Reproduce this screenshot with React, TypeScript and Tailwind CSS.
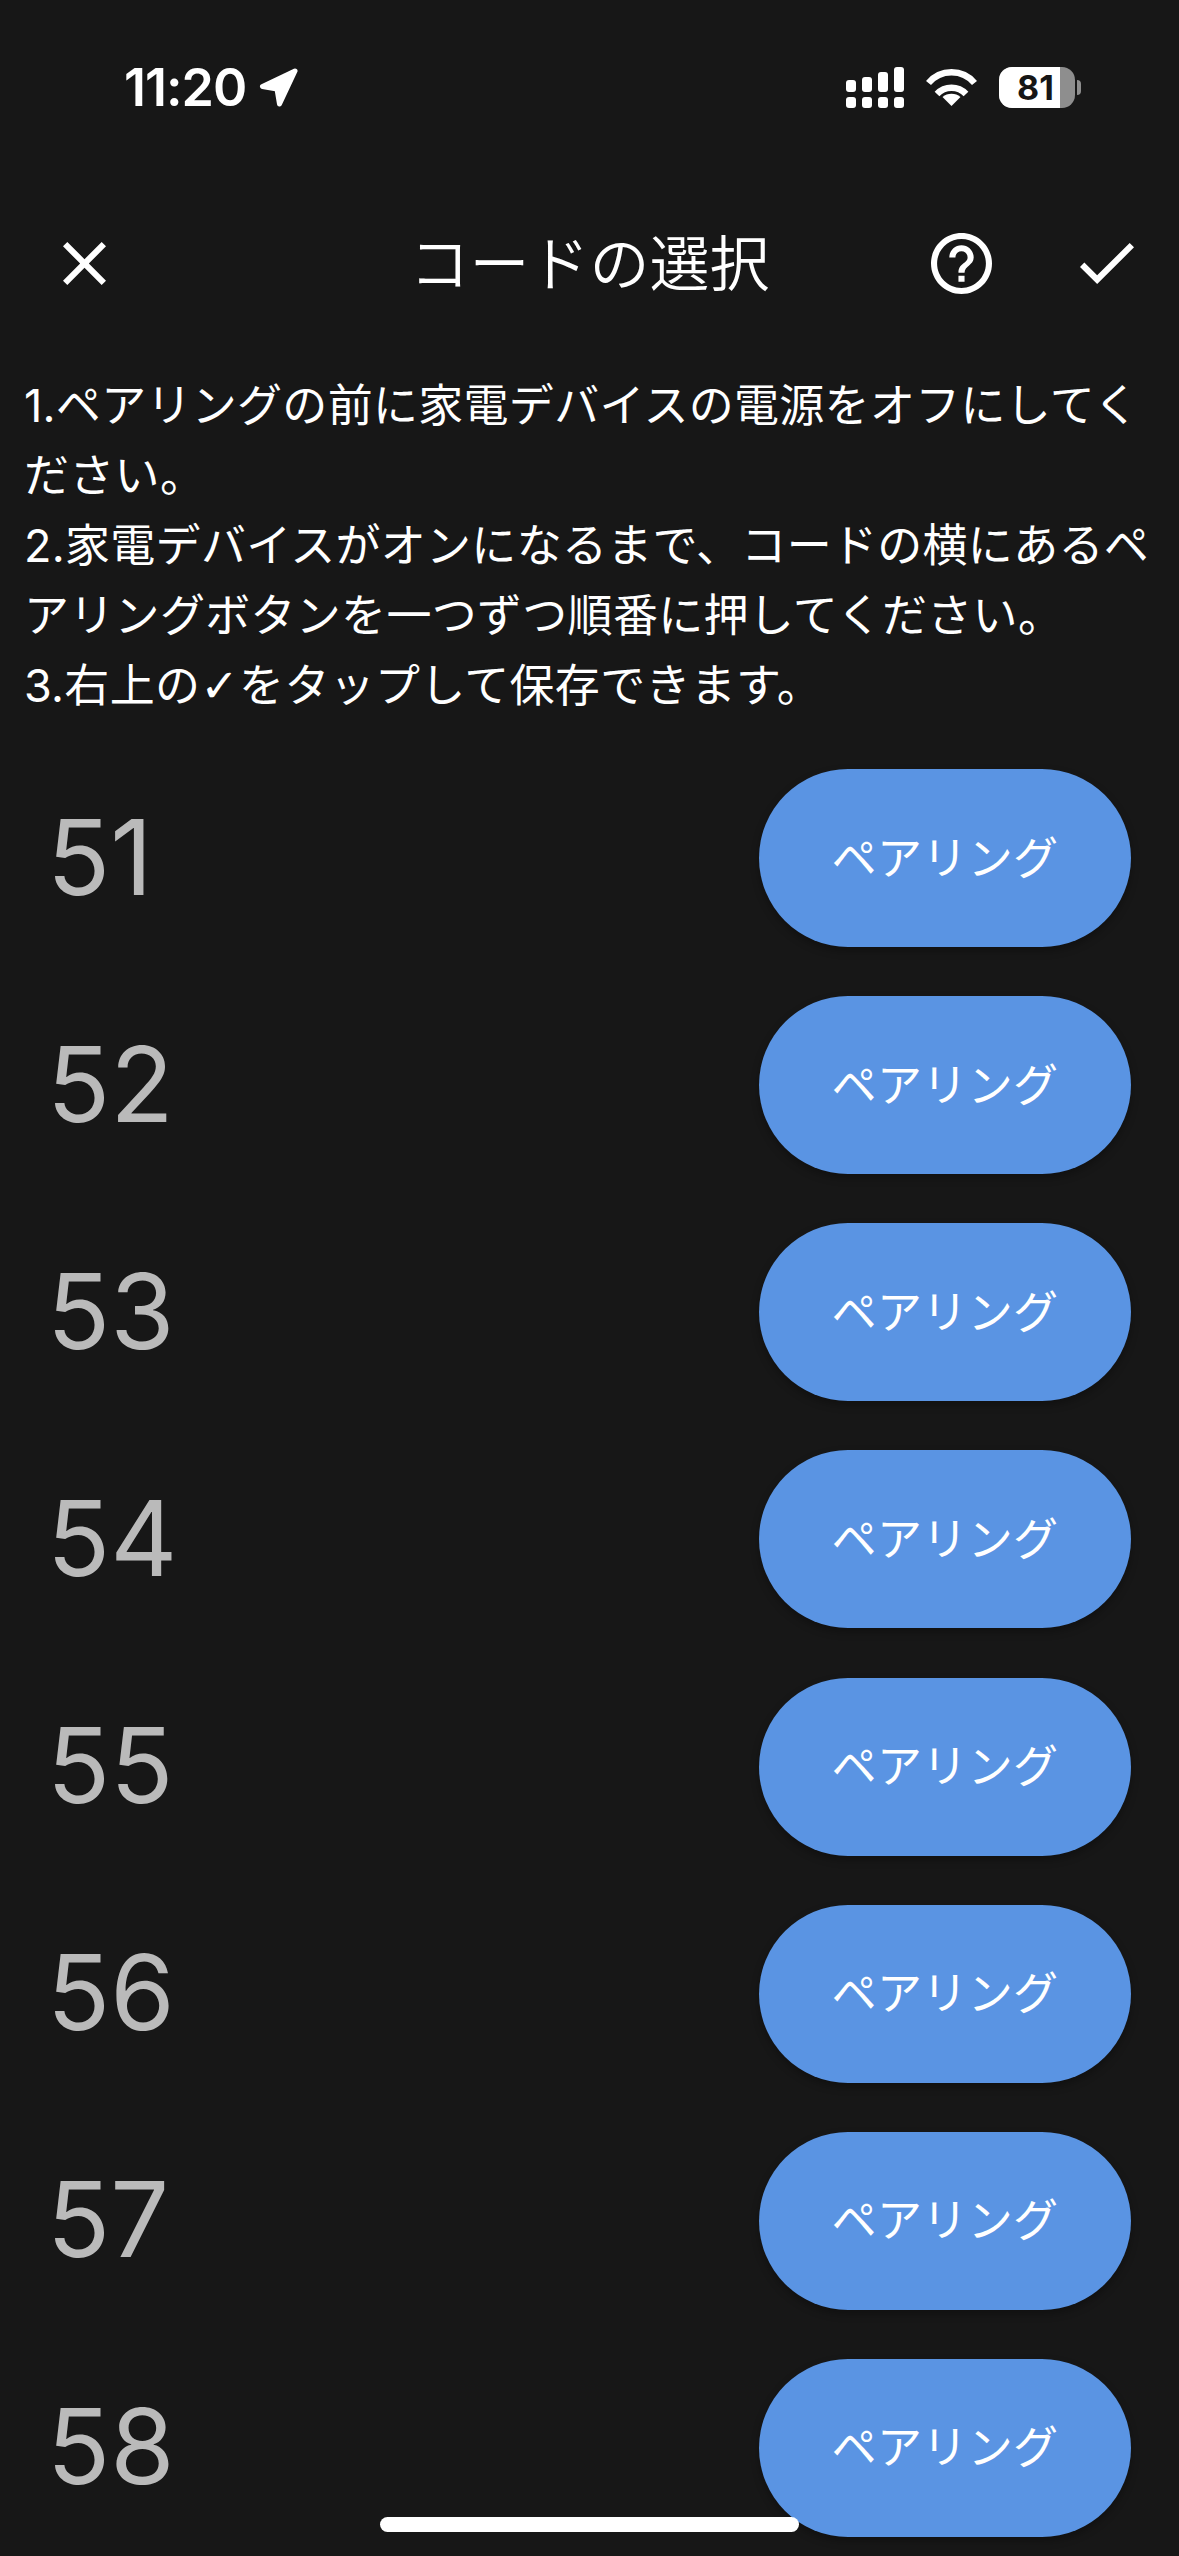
const font = "font-['Inter','Noto_Sans_CJK_JP',sans-serif]";

const codes = [51, 52, 53, 54, 55, 56, 57, 58];

function Signal() {
  const tops = [13, 10, 5, 0];
  return (
    <svg width="58" height="41" viewBox="0 0 58 41" fill="#fff">
      {tops.map((t, i) => (
        <g key={i}>
          <rect x={i * 16} y={t} width="10" height={25 - t} rx="3" />
          <rect x={i * 16} y="30" width="10" height="11" rx="3" />
        </g>
      ))}
    </svg>
  );
}

function Wifi() {
  return (
    <svg width="51" height="37" viewBox="0 0 51 37" fill="none" stroke="#fff">
      <path d="M2.5 14 A30 30 0 0 1 48.5 14" strokeWidth="6.5" />
      <path d="M11 25 A20 20 0 0 1 40 25" strokeWidth="6.5" />
      <path d="M25.5 37 L16.5 28 A14 14 0 0 1 34.5 28 Z" fill="#fff" stroke="none" />
    </svg>
  );
}

function Arrow() {
  return (
    <svg width="39" height="39" viewBox="0 0 39 39" fill="#fff" stroke="#fff" strokeWidth="5" strokeLinejoin="round">
      <path d="M36 3 L3.5 18.5 L18 21 L20.5 36 Z" />
    </svg>
  );
}

function Battery() {
  return (
    <div className="flex items-center gap-[2px]">
      <div className="relative h-[41px] w-[76px] overflow-hidden rounded-[13px] bg-[#8e8e8e]">
        <div className="h-full w-[61px] bg-white" />
        <div className={`absolute left-[18px] top-0 flex h-full items-center text-[34px] font-bold leading-none text-[#161616] ${font}`}>
          81
        </div>
      </div>
      <div className="h-[15px] w-[4px] rounded-r-full bg-[#8e8e8e]" />
    </div>
  );
}

export default function App() {
  return (
    <div className={`relative flex h-[2556px] w-[1179px] flex-col overflow-hidden bg-[#171717] text-white ${font}`}>
      <div className="mt-[67px] flex h-[41px] items-center justify-between pl-[124px] pr-[98px]">
        <div className="flex items-center gap-[13px]">
          <span className="text-[52px] font-semibold leading-none tracking-[-1px]">11:20</span>
          <Arrow />
        </div>
        <div className="flex items-center gap-[22px]">
          <Signal />
          <Wifi />
          <Battery />
        </div>
      </div>

      <div className="mt-[125px] grid h-[61px] grid-cols-[1fr_auto_1fr] items-center">
        <div className="pl-[63px]">
          <svg className="block" width="43" height="43" viewBox="5 5 14 14" fill="#fff">
            <path d="M19 6.41L17.59 5 12 10.59 6.41 5 5 6.41 10.59 12 5 17.59 6.41 19 12 13.41 17.59 19 19 17.59 13.41 12z" />
          </svg>
        </div>
        <h1 className="text-[60px] font-[350] leading-none">コードの選択</h1>
        <div className="flex items-center justify-end gap-[88px] pr-[45px]">
          <svg width="61" height="61" viewBox="2 2 20 20" fill="#fff">
            <path d="M11 18h2v-2h-2v2zm1-16C6.48 2 2 6.48 2 12s4.48 10 10 10 10-4.48 10-10S17.52 2 12 2zm0 18c-4.41 0-8-3.59-8-8s3.59-8 8-8 8 3.59 8 8-3.59 8-8 8zm0-14c-2.21 0-4 1.79-4 4h2c0-1.1.9-2 2-2s2 .9 2 2c0 2-3 1.75-3 5h2c0-2.25 3-2.5 3-5 0-2.21-1.79-4-4-4z" />
          </svg>
          <svg width="54" height="41" viewBox="3.41 5.59 17.59 13.41" preserveAspectRatio="none" fill="#fff">
            <path d="M9 16.17L4.83 12l-1.42 1.41L9 19 21 7l-1.41-1.41z" />
          </svg>
        </div>
      </div>

      <div className="mt-[77px] whitespace-nowrap pl-[24px] text-[45px] leading-[70px] tracking-[0.3px]">
        <div>1.ペアリングの前に家電デバイスの電源をオフにしてく</div>
        <div>ださい。</div>
        <div>2.家電デバイスがオンになるまで、コードの横にあるペ</div>
        <div>アリングボタンを一つずつ順番に押してください。</div>
        <div>
          3.右上の<span className="font-['DejaVu_Sans',sans-serif] text-[46px] leading-none">✓</span>をタップして保存できます。
        </div>
      </div>

      <div className="mt-[48px] flex flex-col gap-[49.14px] pl-[47px] pr-[48px]">
        {codes.map((c) => (
          <div key={c} className="flex h-[178px] shrink-0 items-center justify-between">
            <span className="mb-[3px] text-[104px] leading-none text-[#bababa]">{c}</span>
            <button className="h-[178px] w-[372px] rounded-full bg-[#5a94e3] text-[45px] leading-none tracking-[0.4px] text-white shadow-[0_4px_8px_rgba(0,0,0,0.3)]">
              ペアリング
            </button>
          </div>
        ))}
      </div>

      <div className="absolute left-[380px] top-[2517px] h-[15px] w-[419px] rounded-full bg-white" />
    </div>
  );
}
